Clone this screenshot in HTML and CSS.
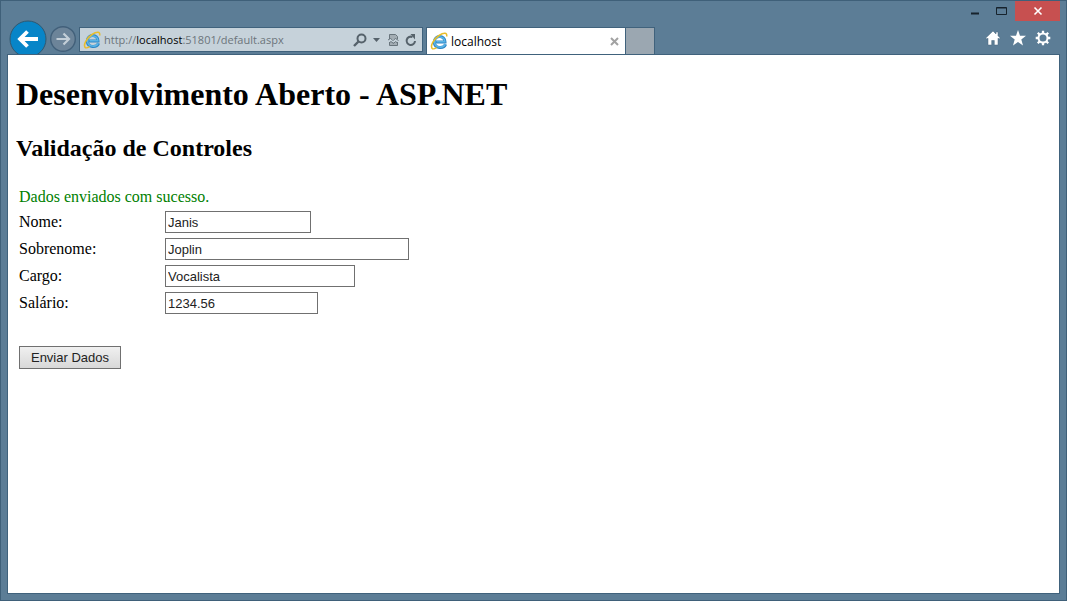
FILE: index.html
```html
<!DOCTYPE html>
<html lang="pt-BR">
<head>
<meta charset="utf-8">
<title>localhost</title>
<link rel="stylesheet" href="styles.css">
</head>
<body>
<svg class="defs" aria-hidden="true">
  <symbol id="ie" viewBox="0 0 18 18">
    <path d="M15.600 12.200C13.800 17 4.500 17 4.300 10 4.200 3 15 2.500 15 10H6" fill="none" stroke="#2c86c6" stroke-width="3"/>
    <path d="M15.200 12.200C13.500 16.300 4.700 16.500 4.500 10 4.500 3.600 14.600 3.200 14.800 9.700H6.500" fill="none" stroke="#5ab4e6" stroke-width="1.600"/>
    <path d="M2.600 16.800C-.4 14.500 3.500 7 9 3.500 13.500.6 17.600.2 16.600 4.500" fill="none" stroke="#e8bd2a" stroke-width="1.500"/>
    <path d="M2.200 16.400C3.200 17.200 5 16.600 6.600 15.600" fill="none" stroke="#e8bd2a" stroke-width="1.300"/>
  </symbol>
</svg>
<div class="window">
  <header class="chrome">
    <div class="titlebar">
      <button class="caption" aria-label="Minimizar"><svg width="10" height="10"><path d="M1 7.500h8" stroke="#17232c" stroke-width="2"/></svg></button>
      <button class="caption" aria-label="Maximizar"><svg width="11" height="10"><path d="M.5 1.500h10v7H.5zM.5 2h10" fill="none" stroke="#17232c"/></svg></button>
      <button class="caption close" aria-label="Fechar"><svg width="10" height="10"><path d="M1.500 1.500l7 7m0-7l-7 7" stroke="#fff" stroke-width="1.600"/></svg></button>
    </div>
    <nav class="toolbar">
      <button class="back" aria-label="Voltar"><svg width="38" height="38"><circle cx="19" cy="19" r="18" fill="#0785c8" stroke="#315870"/><path d="M29 19H11M18.500 11.500L11 19l7.500 7.500" fill="none" stroke="#fff" stroke-width="3.800"/></svg></button>
      <button class="forward" aria-label="Avançar"><svg width="26" height="26"><circle cx="13" cy="13" r="12.300" fill="#6c8499" stroke="#42607a" stroke-width="1.400"/><path d="M6.500 13h12M13.500 7.500L19 13l-5.500 5.500" fill="none" stroke="#c3ced7" stroke-width="2.200"/></svg></button>
      <div class="address">
        <svg class="favicon"><use href="#ie"/></svg>
        <span class="url">http://<b>localhost</b>:51801/default.aspx</span>
        <button class="tool" aria-label="Pesquisar"><svg width="14" height="14"><circle cx="8.500" cy="5.500" r="4" fill="none" stroke="#56626b" stroke-width="2"/><path d="M5.500 8.500L1 13" stroke="#56626b" stroke-width="2.400"/></svg></button>
        <button class="tool drop" aria-label="Opções"><svg width="7" height="4"><path d="M0 0h7L3.500 4z" fill="#56626b"/></svg></button>
        <button class="tool" aria-label="Modo de compatibilidade"><svg width="11" height="14"><path d="M1.500 6V1.500h6l2 2V6M1.500 9v3.500h8V9" fill="#a3adb4" stroke="#68747c"/><path d="M0 7l2.500-1.500L5 7.500 7.500 5.500 10.500 7.500M1 10l2-1.500 2.500 2 2-2 2 1.500" fill="none" stroke="#68747c"/></svg></button>
        <button class="tool" aria-label="Atualizar"><svg width="12" height="14"><path d="M10 8A4.200 4.200 0 1 1 7.500 4" fill="none" stroke="#56626b" stroke-width="2"/><path d="M5.500 1H10v5.500z" fill="#56626b"/></svg></button>
      </div>
      <div class="tab">
        <svg class="favicon"><use href="#ie"/></svg>
        <span class="tab-title">localhost</span>
        <button class="tool" aria-label="Fechar guia"><svg width="9" height="9"><path d="M1 1l7 7m0-7L1 8" stroke="#a2a2a2" stroke-width="2"/></svg></button>
      </div>
      <button class="new-tab" aria-label="Nova guia"></button>
      <div class="actions">
        <button class="tool" aria-label="Página inicial"><svg width="16" height="16"><path d="M8 1L.8 8l1 1L3 8.200V15h3.700v-4.500h2.600V15H13V8.200l1.200.8 1-1L13 5.800V2h-2v2z" fill="#fff" stroke="#48667c" stroke-width=".5"/></svg></button>
        <button class="tool" aria-label="Favoritos"><svg width="16" height="16"><path d="M8 0l2 5.700 6 .1-4.700 3.600 1.700 6L8 12l-5 3.400 1.700-6L0 5.800l6-.1z" fill="#fff"/></svg></button>
        <button class="tool" aria-label="Ferramentas"><svg width="16" height="16" fill="none" stroke="#fff"><circle cx="8" cy="8" r="4.500" stroke-width="2"/><path d="M8 .7v3M8 12.300v3M.7 8h3M12.300 8h3M2.800 2.800l2.200 2.200M11 11l2.200 2.200M13.200 2.800L11 5M5 11l-2.200 2.200" stroke-width="2.300"/></svg></button>
      </div>
    </nav>
  </header>
  <main class="page">
    <h1 class="title">Desenvolvimento Aberto - ASP.NET</h1>
    <h2 class="subtitle">Validação de Controles</h2>
    <form class="form">
      <p class="status">Dados enviados com sucesso.</p>
      <label class="label" for="nome">Nome:</label>
      <input class="field" id="nome" type="text" value="Janis">
      <label class="label" for="sobrenome">Sobrenome:</label>
      <input class="field field-large" id="sobrenome" type="text" value="Joplin">
      <label class="label" for="cargo">Cargo:</label>
      <input class="field field-medium" id="cargo" type="text" value="Vocalista">
      <label class="label" for="salario">Salário:</label>
      <input class="field field-small" id="salario" type="text" value="1234.56">
      <button class="submit" type="button">Enviar Dados</button>
    </form>
  </main>
</div>
</body>
</html>
```
FILE: styles.css
```css
* { box-sizing: border-box; }

body {
  margin: 0;
  background: #5c7d96;
  font-family: "Liberation Serif", "Times New Roman", serif;
  font-size: 16px;
  color: #000;
}

button {
  padding: 0;
  border: 0;
  background: none;
  font: inherit;
}

svg { display: block; flex: none; }

.defs { position: absolute; width: 0; height: 0; }

.window {
  display: flex;
  flex-direction: column;
  min-height: 100vh;
  padding: 0 6px 6px;
  border: 1px solid #3f6079;
}

.chrome {
  overflow: hidden;
  font-family: "Open Sans", "Noto Sans", sans-serif;
  font-size: 12px;
}

.titlebar {
  display: flex;
  justify-content: flex-end;
  height: 19px;
}

.caption {
  display: flex;
  align-items: center;
  justify-content: center;
  width: 27px;
  height: 20px;
}

.close {
  width: 45px;
  background: #c75050;
}

.toolbar {
  display: flex;
  align-items: flex-start;
  height: 34px;
  padding-left: 2px;
}

.back { height: 38px; }

.forward { margin: 6px 3px 0; }

.address {
  display: flex;
  align-items: center;
  gap: 6px;
  width: 32%;
  min-width: 344px;
  height: 25px;
  margin-top: 7px;
  padding: 0 5px 0 3px;
  border: 1px solid #40627c;
  background: #c6d2da;
  color: #6c757b;
}

.favicon { width: 18px; height: 18px; }

.url {
  flex: 1;
  margin-left: -3px;
  white-space: nowrap;
  font-size: 11px;
}

.url b { font-weight: 400; color: #000; }

.drop { margin-right: 2px; }

.tab {
  display: flex;
  align-items: center;
  gap: 3px;
  width: 200px;
  height: 27px;
  margin: 7px 0 0 3px;
  padding: 0 6px 0 3px;
  border: 1px solid #40627c;
  border-bottom: 0;
  background: #fff;
}

.tab-title { flex: 1; font-size: 12px; }

.new-tab {
  width: 29px;
  height: 27px;
  margin-top: 7px;
  border: 1px solid #40627c;
  border-width: 1px 1px 0 0;
  background: #9ba7b1;
}

.actions {
  display: flex;
  gap: 9px;
  margin: 10px 9px 0 auto;
}

.page {
  flex: 1;
  padding: 0 8px;
  border: 1px solid #40627c;
  background: #fff;
}

.title {
  margin: 21px 0 0;
  font-size: 32px;
  line-height: 37px;
}

.subtitle {
  margin: 21px 0 0;
  font-size: 24px;
  line-height: 28px;
}

.form {
  display: grid;
  grid-template-columns: 141px 1fr;
  gap: 5px;
  align-items: center;
  justify-items: start;
  padding: 25px 3px;
}

.status {
  grid-column: 1 / -1;
  margin: 0;
  line-height: 19px;
  color: #008000;
}

.label { line-height: 22px; }

.field {
  width: 146px;
  height: 22px;
  padding: 0 2px;
  border: 1px solid #707070;
  background: #fff;
  color: #222;
  font-family: "Liberation Sans", Arial, sans-serif;
  font-size: 13px;
}

.field-large { width: 244px; }
.field-medium { width: 190px; }
.field-small { width: 153px; }

.submit {
  grid-column: 1 / -1;
  width: 102px;
  height: 23px;
  margin-top: 27px;
  border: 1px solid #707070;
  background: linear-gradient(#f0f0f0, #d8d8d8);
  color: #222;
  font-family: "Liberation Sans", Arial, sans-serif;
  font-size: 13px;
}
```
